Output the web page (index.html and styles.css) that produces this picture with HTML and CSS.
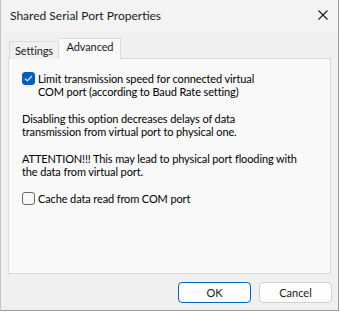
FILE: index.html
```html
<!DOCTYPE html>
<html>
<head>
<meta charset="utf-8">
<link rel="stylesheet" href="styles.css">
</head>
<body>
<div class="window">
  <div class="titlebar">
    <span class="title">Shared Serial Port Properties</span>
    <span class="close">
      <svg width="10" height="10" viewBox="0 0 10 10"><path d="M0.5 0.5 L9.5 9.5 M9.5 0.5 L0.5 9.5" stroke="#1a1a1a" stroke-width="1.1" fill="none"/></svg>
    </span>
  </div>
  <div class="tabs">
    <div class="tab">Settings</div>
    <div class="tab active">Advanced</div>
  </div>
  <div class="panel">
    <label class="check">
      <span class="box checked">
        <svg width="9" height="7" viewBox="0 0 9 7"><path d="M1 3.6 L3.3 5.8 L8 1" stroke="#fff" stroke-width="1.1" fill="none"/></svg>
      </span>
      <span class="label">Limit transmission speed for connected virtual<br>COM port (according to Baud Rate setting)</span>
    </label>
    <p class="text">Disabling this option decreases delays of data<br>transmission from virtual port to physical one.</p>
    <p class="text">ATTENTION!!! This may lead to physical port flooding with<br>the data from virtual port.</p>
    <label class="check check2">
      <span class="box"></span>
      <span class="label">Cache data read from COM port</span>
    </label>
  </div>
  <div class="footer">
    <button class="btn primary">OK</button>
    <button class="btn">Cancel</button>
  </div>
</div>
</body>
</html>
```

FILE: styles.css
```css
html, body {
  margin: 0;
  padding: 0;
  background: #ffffff;
}
body {
  font-family: Lato, "Noto Sans", sans-serif;
  font-size: 11px;
  letter-spacing: -0.12px;
  color: #000;
}
.window {
  width: 339px;
  height: 311px;
  box-sizing: border-box;
  background: #f0f0f0;
  border: 1px solid #9a9a9a;
  border-top: none;
  border-left-color: #c4c4c4;
  display: flex;
  flex-direction: column;
}
.titlebar {
  height: 31px;
  background: #f3f3f3;
  display: flex;
  align-items: center;
  justify-content: space-between;
  padding: 0 9px 1px 9px;
  box-sizing: border-box;
}
.title {
  font-size: 12px;
  letter-spacing: 0;
  color: #1a1a1a;
}
.close {
  display: flex;
  margin-right: 1px;
}
.tabs {
  display: flex;
  align-items: flex-end;
  height: 28px;
  box-sizing: border-box;
  padding: 7px 0 0 8px;
  margin-bottom: -1px;
  position: relative;
  z-index: 1;
}
.tab {
  height: 18px;
  width: 50px;
  box-sizing: border-box;
  border: 1px solid #dadada;
  border-bottom: none;
  background: #f0f0f0;
  text-align: center;
  line-height: 18px;
  color: #1a1a1a;
  white-space: nowrap;
}
.tab.active {
  height: 21px;
  width: 62px;
  background: #f9f9f9;
  border-left: none;
  line-height: 16px;
  text-align: center;
  padding-left: 1px;
}
.panel {
  margin: 0 7px 0 7px;
  height: 216px;
  box-sizing: border-box;
  border: 1px solid #dadada;
  background: #f9f9f9;
  padding: 13px 12px 0 13px;
  white-space: nowrap;
}
.check {
  display: flex;
  align-items: flex-start;
  gap: 3px;
  line-height: 13px;
}
.box {
  width: 13px;
  height: 13px;
  box-sizing: border-box;
  border: 1px solid #6a6a6a;
  border-radius: 3px;
  background: #f6f6f6;
  display: flex;
  align-items: center;
  justify-content: center;
  flex: none;
}
.box.checked {
  background: #005fb8;
  border-color: #005fb8;
}
.text {
  margin: 14px 0 0 0;
  line-height: 13px;
}
.check2 {
  margin-top: 14px;
}
.footer {
  display: flex;
  justify-content: flex-end;
  gap: 8px;
  padding: 8px 6px 0 0;
}
.btn {
  width: 73px;
  height: 21px;
  box-sizing: border-box;
  border: 1px solid #d0d0d0;
  border-radius: 4px;
  background: #fdfdfd;
  font-family: Lato, "Noto Sans", sans-serif;
  font-size: 11px;
  color: #1a1a1a;
  padding: 0;
}
.btn.primary {
  border-color: #0067c0;
}
```
